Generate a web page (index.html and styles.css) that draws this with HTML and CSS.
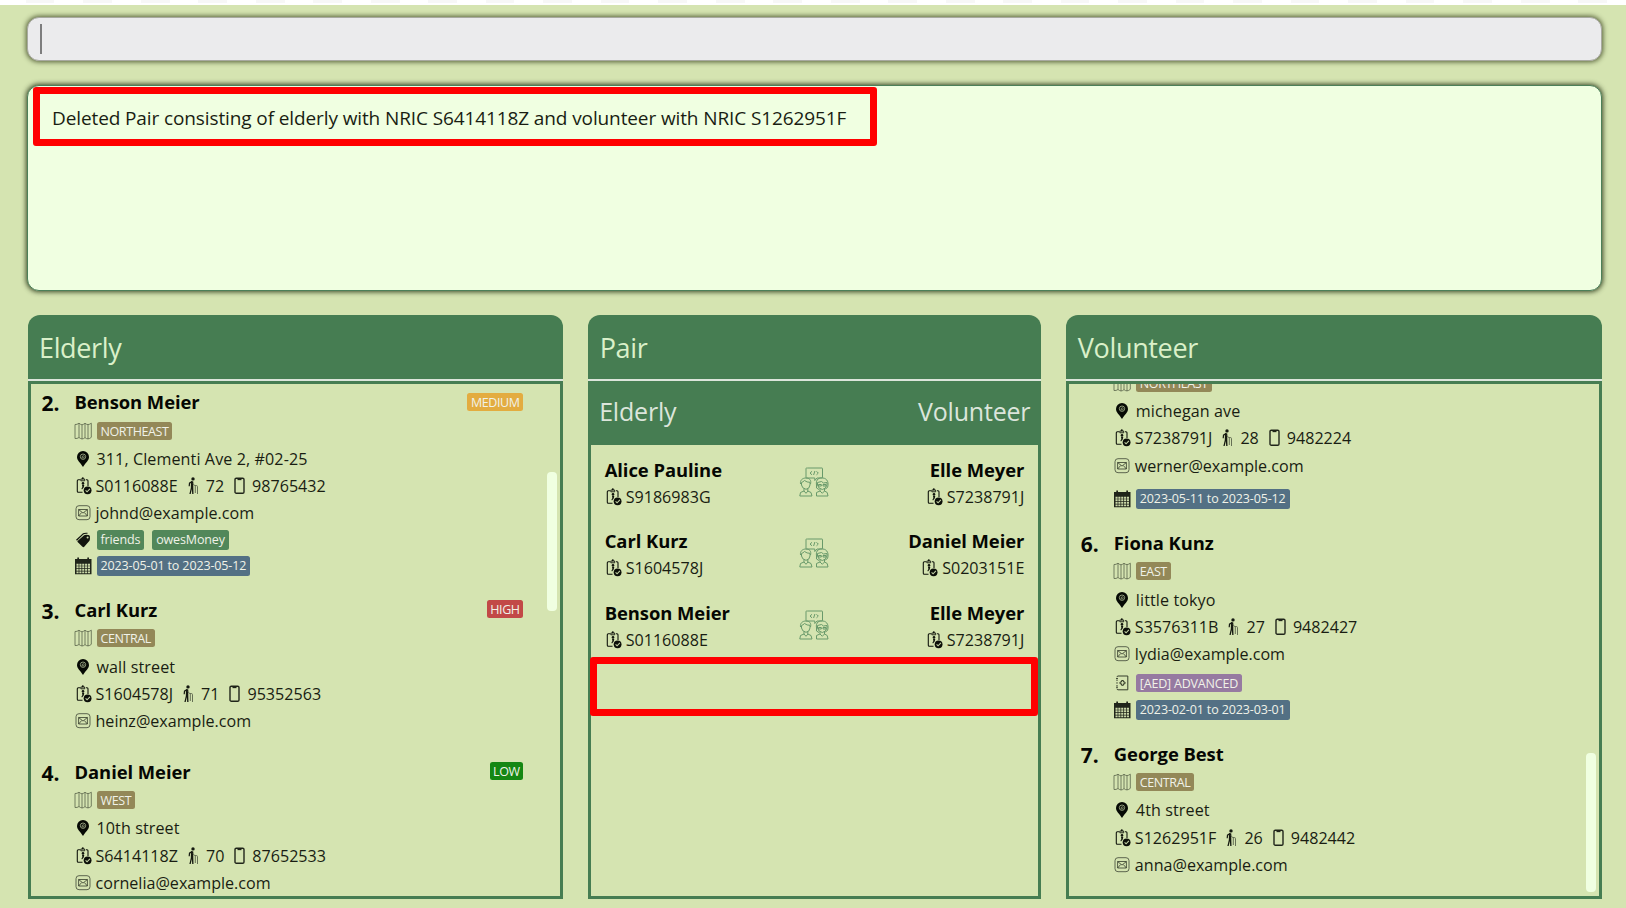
FILE: index.html
```
<!DOCTYPE html>
<html lang="en">
<head>
<meta charset="utf-8">
<title>Elderly and volunteer pairing</title>
<link rel="stylesheet" href="styles.css">
</head>
<body>
<svg class="sprite" aria-hidden="true">
  <symbol id="map" viewBox="0 0 18 18"><path d="M1 2.500Q3 2.800 5 1.200Q6.500 2.600 8 2.800Q9.500 2.500 11 1.300Q12.500 2.500 14 2.600Q15.800 2.400 17.300 1.200V15.300Q15.800 16.700 14 16.900Q12.500 16.900 11 15.600Q9.500 16.900 8 17Q6.500 16.700 5 15.500Q3 16.900 1 16.500ZM5 1.200V15.500M8 2.800V17M11 1.300V15.600M14 2.600V17" fill="none" stroke="#59634a" stroke-width=".8"/></symbol>
  <symbol id="pin" viewBox="0 0 18 18"><path d="M9 1A6 6 0 0 0 3 7C3 10.500 6.300 12.500 9 17C11.700 12.500 15 10.500 15 7A6 6 0 0 0 9 1Z" fill="#060a04"/><circle cx="9" cy="6.700" r="2.700" fill="none" stroke="#abb792" stroke-width=".8"/><path d="M7.500 7.200 9.200 5.700 10.600 6.700M8 7.800H10.300" fill="none" stroke="#abb792" stroke-width=".8"/></symbol>
  <symbol id="idcard" viewBox="0 0 18 18"><path d="M6 2.700H4.300Q3.300 2.700 3.300 3.700V14.300Q3.300 15.300 4.300 15.300H8.500M12 2.700H13Q14 2.700 14 3.700V9" fill="none" stroke="#11150c" stroke-width="1.100"/><path d="M6.800 2H10.700V3.800H6.800Z" fill="none" stroke="#11150c" stroke-width=".9"/><circle cx="8.800" cy="1.300" r="1" fill="#11150c"/><circle cx="9" cy="6.400" r="1.300" fill="#11150c"/><path d="M8 8H10.300L9.700 10.500 8 12.500 7.400 11.700 8.400 10Z" fill="#11150c"/><circle cx="13.600" cy="13.300" r="3.900" fill="#0b0e08"/><path d="m11.600 13.300 1.500 1.500 2.800-2.900" fill="none" stroke="#c4d2a6" stroke-width="1.100"/></symbol>
  <symbol id="mail" viewBox="0 0 18 18"><rect x="2" y="1.700" width="14" height="14" rx="3" fill="none" stroke="#5d664f" stroke-width="1"/><path d="M4.600 5.500H13.400V12H4.600ZM4.600 5.500 9 9.100 13.400 5.500M4.600 12 7.700 8.500M13.400 12 10.300 8.500" fill="none" stroke="#343b2b" stroke-width=".8"/></symbol>
  <symbol id="tags" viewBox="0 0 18 18"><path d="m2 8.800 7-6.600Q10 1.500 13.500 1.700V2.800Q10.500 2.600 9.300 3.400L3 9.700Z" fill="#12150e"/><path d="m3.600 10 6.500-5.800Q11 3.500 14.500 4Q15.800 4.300 15.900 5.500Q16.200 8.500 15.500 9.700L10 16.100Q9.200 16.500 8.500 15.800L3.600 11Q3.200 10.500 3.600 10Z" fill="#12150e"/><circle cx="13.600" cy="6.500" r="1" fill="#cedcac"/></symbol>
  <symbol id="calendar" viewBox="0 0 18 18"><path d="M1 2H17.500V17.200H1ZM3.300.5H5V3H3.300ZM13.300.5H15V3H13.300Z" fill="#20251a"/><path d="M2.500 7.700H16M2.500 10.300H16M2.500 12.900H16M2.500 15.400H16" stroke="#cbd9a9" stroke-width="1.900" stroke-dasharray="2.100 .75"/></symbol>
  <symbol id="walk" viewBox="0 0 11 18"><circle cx="5" cy="1.900" r="1.700" fill="#151910"/><path d="M4.400 4.300 1.500 6.200 1.200 9.300" fill="none" stroke="#151910" stroke-width="1.200"/><path d="M3 4.500H5.300V10.500L5.500 17H4.200L3.900 12 2.700 17H1.400L2.800 11Z" fill="#151910"/><path d="M5 6.500 6.500 8.500H8.300Q9.500 8.500 9.500 9.700V17M7.300 9V16" fill="none" stroke="#59624b" stroke-width=".9"/></symbol>
  <symbol id="phone" viewBox="0 0 11 18"><rect x="1" y="1.200" width="9" height="15" rx="1.300" fill="none" stroke="#20251a" stroke-width="1.400"/><path d="M3.500 2.300H7.500" stroke="#20251a" stroke-width="1.700"/></symbol>
  <symbol id="medical" viewBox="0 0 18 18"><path d="M4 3.200Q4 2 5 2H14.800V15.800H5Q4 15.800 4 14.600M4 5.500V7M4 8.200V9.700M4 11V12.500" fill="none" stroke="#353c2b" stroke-width="1"/><path d="M3 4.500H5M3 13.300H5" stroke="#353c2b" stroke-width=".9"/><path d="M8.600 6.500H10.400V8H12V9.800H10.400V11.300H8.600V9.800H7V8H8.600Z" fill="none" stroke="#252b1c" stroke-width=".9"/></symbol>
  <symbol id="couple" viewBox="0 0 30 30"><g fill="none" stroke="#68996a" stroke-width="1"><path d="M8.500 1H23Q23.500 1 23.500 1.500V10.500Q23.500 11 23 11H18L15.800 13.500V11H7.500Q7 11 7 10.500V1.500Q7 1 7.500 1ZM13 4.300 11 6.100 13 7.800M17.500 4.300 19.300 6.100 17.500 7.800M15.900 4 14.600 8"/><path d="M1.500 17C1 13 3.500 11 7 11S12.500 13 11.500 17M2.500 15.500Q4 15 5.500 13.500Q8 15.500 11 15.300V18Q10.500 22 7 22.300Q3 21.500 2.500 18ZM5 21.500V24L1.500 25.500.8 29H13L12 25.500 8.800 24V21.500M5 24 7 26.300 9 24"/><path d="M17.500 18C16.500 12 20.500 10.300 24 11C28.500 11.500 30 16 28.500 20.500L26.300 22M17.500 18V21L20 22.500M18.500 15.500 22.500 14.500 24.500 16 28 15.500V18Q27 22 23.300 22.500Q19 21.500 18.500 18ZM19.500 17.500H22.300V19H19.500ZM24 17.500H27V19H24ZM21 22V24L17.500 25.500V29H29L28.200 25.500 25.500 24V22M21 24 23.300 26.300 25.500 24"/></g></symbol>
</svg>

<div class="strip"></div>
<main class="window">
  <div class="command"><span class="caret"></span></div>
  <section class="result">
    <p class="message">Deleted Pair consisting of elderly with NRIC S6414118Z and volunteer with NRIC S1262951F</p>
    <div class="mark mark-message"></div>
  </section>

  <div class="panels">
    <section class="panel wide">
      <h2 class="panel-title">Elderly</h2>
      <div class="panel-body">
        <article class="person">
          <div class="index">2.</div>
          <div class="details">
            <div class="name-row"><h3>Benson Meier</h3><span class="badge medium">MEDIUM</span></div>
            <div class="row region-row"><svg class="icon"><use href="#map"/></svg><span class="badge region">NORTHEAST</span></div>
            <div class="row"><svg class="icon"><use href="#pin"/></svg><span class="address">311, Clementi Ave 2, #02-25</span></div>
            <div class="row"><svg class="icon"><use href="#idcard"/></svg><span>S0116088E</span><svg class="icon slim"><use href="#walk"/></svg><span>72</span><svg class="icon slim"><use href="#phone"/></svg><span>98765432</span></div>
            <div class="row"><svg class="icon"><use href="#mail"/></svg><span>johnd@example.com</span></div>
            <div class="row chips"><svg class="icon"><use href="#tags"/></svg><span class="badge tag">friends</span><span class="badge tag">owesMoney</span></div>
            <div class="row chips"><svg class="icon"><use href="#calendar"/></svg><span class="badge date">2023-05-01 to 2023-05-12</span></div>
          </div>
        </article>
        <article class="person">
          <div class="index">3.</div>
          <div class="details">
            <div class="name-row"><h3>Carl Kurz</h3><span class="badge high">HIGH</span></div>
            <div class="row region-row"><svg class="icon"><use href="#map"/></svg><span class="badge region">CENTRAL</span></div>
            <div class="row"><svg class="icon"><use href="#pin"/></svg><span class="address">wall street</span></div>
            <div class="row"><svg class="icon"><use href="#idcard"/></svg><span>S1604578J</span><svg class="icon slim"><use href="#walk"/></svg><span>71</span><svg class="icon slim"><use href="#phone"/></svg><span>95352563</span></div>
            <div class="row"><svg class="icon"><use href="#mail"/></svg><span>heinz@example.com</span></div>
          </div>
        </article>
        <article class="person after-short">
          <div class="index">4.</div>
          <div class="details">
            <div class="name-row"><h3>Daniel Meier</h3><span class="badge low">LOW</span></div>
            <div class="row region-row"><svg class="icon"><use href="#map"/></svg><span class="badge region">WEST</span></div>
            <div class="row"><svg class="icon"><use href="#pin"/></svg><span class="address">10th street</span></div>
            <div class="row"><svg class="icon"><use href="#idcard"/></svg><span>S6414118Z</span><svg class="icon slim"><use href="#walk"/></svg><span>70</span><svg class="icon slim"><use href="#phone"/></svg><span>87652533</span></div>
            <div class="row"><svg class="icon"><use href="#mail"/></svg><span>cornelia@example.com</span></div>
          </div>
        </article>
        <div class="thumb thumb-middle"></div>
      </div>
    </section>

    <section class="panel narrow">
      <h2 class="panel-title">Pair</h2>
      <div class="pair-head"><span>Elderly</span><span>Volunteer</span></div>
      <div class="panel-body pair-body">
        <article class="pair">
          <div class="side"><h3>Alice Pauline</h3><div class="row"><svg class="icon"><use href="#idcard"/></svg><span>S9186983G</span></div></div>
          <svg class="couple"><use href="#couple"/></svg>
          <div class="side end"><h3>Elle Meyer</h3><div class="row"><svg class="icon"><use href="#idcard"/></svg><span>S7238791J</span></div></div>
        </article>
        <article class="pair">
          <div class="side"><h3>Carl Kurz</h3><div class="row"><svg class="icon"><use href="#idcard"/></svg><span>S1604578J</span></div></div>
          <svg class="couple"><use href="#couple"/></svg>
          <div class="side end"><h3>Daniel Meier</h3><div class="row"><svg class="icon"><use href="#idcard"/></svg><span>S0203151E</span></div></div>
        </article>
        <article class="pair">
          <div class="side"><h3>Benson Meier</h3><div class="row"><svg class="icon"><use href="#idcard"/></svg><span>S0116088E</span></div></div>
          <svg class="couple"><use href="#couple"/></svg>
          <div class="side end"><h3>Elle Meyer</h3><div class="row"><svg class="icon"><use href="#idcard"/></svg><span>S7238791J</span></div></div>
        </article>
      </div>
      <div class="mark mark-pair"></div>
    </section>

    <section class="panel wide">
      <h2 class="panel-title">Volunteer</h2>
      <div class="panel-body scrolled">
        <article class="person">
          <div class="index"></div>
          <div class="details">
            <div class="row region-row"><svg class="icon"><use href="#map"/></svg><span class="badge region">NORTHEAST</span></div>
            <div class="row"><svg class="icon"><use href="#pin"/></svg><span class="address">michegan ave</span></div>
            <div class="row"><svg class="icon"><use href="#idcard"/></svg><span>S7238791J</span><svg class="icon slim"><use href="#walk"/></svg><span>28</span><svg class="icon slim"><use href="#phone"/></svg><span>9482224</span></div>
            <div class="row"><svg class="icon"><use href="#mail"/></svg><span>werner@example.com</span></div>
            <div class="row chips spaced"><svg class="icon"><use href="#calendar"/></svg><span class="badge date">2023-05-11 to 2023-05-12</span></div>
          </div>
        </article>
        <article class="person">
          <div class="index">6.</div>
          <div class="details">
            <div class="name-row"><h3>Fiona Kunz</h3></div>
            <div class="row region-row"><svg class="icon"><use href="#map"/></svg><span class="badge region">EAST</span></div>
            <div class="row"><svg class="icon"><use href="#pin"/></svg><span class="address">little tokyo</span></div>
            <div class="row"><svg class="icon"><use href="#idcard"/></svg><span>S3576311B</span><svg class="icon slim"><use href="#walk"/></svg><span>27</span><svg class="icon slim"><use href="#phone"/></svg><span>9482427</span></div>
            <div class="row"><svg class="icon"><use href="#mail"/></svg><span>lydia@example.com</span></div>
            <div class="row chips skill-row"><svg class="icon"><use href="#medical"/></svg><span class="badge skill">[AED] ADVANCED</span></div>
            <div class="row chips"><svg class="icon"><use href="#calendar"/></svg><span class="badge date">2023-02-01 to 2023-03-01</span></div>
          </div>
        </article>
        <article class="person">
          <div class="index">7.</div>
          <div class="details">
            <div class="name-row"><h3>George Best</h3></div>
            <div class="row region-row"><svg class="icon"><use href="#map"/></svg><span class="badge region">CENTRAL</span></div>
            <div class="row"><svg class="icon"><use href="#pin"/></svg><span class="address">4th street</span></div>
            <div class="row"><svg class="icon"><use href="#idcard"/></svg><span>S1262951F</span><svg class="icon slim"><use href="#walk"/></svg><span>26</span><svg class="icon slim"><use href="#phone"/></svg><span>9482442</span></div>
            <div class="row"><svg class="icon"><use href="#mail"/></svg><span>anna@example.com</span></div>
          </div>
        </article>
        <div class="thumb thumb-end"></div>
      </div>
    </section>
  </div>
</main>
</body>
</html>
```
FILE: styles.css
```
* { box-sizing: border-box; }

body {
  margin: 0;
  height: 908px;
  overflow: hidden;
  display: flex;
  flex-direction: column;
  background: #d5e4b1;
  color: #191d12;
  font-family: "Open Sans", "Noto Sans", sans-serif;
  font-size: 16.100px;
}

h2, h3, p { margin: 0; }

.sprite { position: absolute; width: 0; height: 0; }

.strip {
  flex: none;
  height: 5px;
  background: repeating-linear-gradient(90deg, #f7f7f7 0 28.750px, #fff 28.750px 57.500px) -31.750px 0 / 1700px 3px no-repeat #fff;
}

.window {
  flex: 1;
  min-height: 0;
  display: flex;
  flex-direction: column;
  padding: 12px 24px 9px 27px;
}

.command {
  flex: none;
  height: 44px;
  margin-bottom: 24px;
  padding: 6px 12px;
  background: #ebebed;
  border: 1px solid #a8a9a0;
  border-radius: 12px;
  box-shadow: 0 0 5px 1px rgba(40, 50, 15, .75);
}

.caret { display: block; width: 2px; height: 30px; background: #7d7d7e; }

.result {
  position: relative;
  flex: none;
  height: 206px;
  margin-bottom: 24px;
  padding: 19px 24px;
  background: #f0ffe1;
  border: 1px solid #4c8059;
  border-radius: 12px;
  box-shadow: 0 0 5px 1px rgba(30, 45, 15, .85);
}

.message { font-size: 19px; line-height: 26px; letter-spacing: -.11px; white-space: nowrap; }

.mark { position: absolute; border: 7px solid #f00; border-radius: 3px; }
.mark-message { left: 5px; top: 1px; width: 844px; height: 59px; }
.mark-pair { left: 1.500px; top: 342px; width: 448px; height: 59px; }

.panels { flex: 1; min-height: 0; display: flex; gap: 25px; padding-left: .5px; }
.panel { position: relative; display: flex; flex-direction: column; min-width: 0; }
.wide { flex: 535.500 0 0; }
.narrow { flex: 453 0 0; }

.panel-title {
  flex: none;
  height: 64px;
  padding: 0 11.500px;
  border-radius: 12px 12px 0 0;
  background: #467d52;
  color: #daf0c9;
  font-size: 27px;
  font-weight: 400;
  letter-spacing: -.35px;
  line-height: 65px;
}

.panel-title + div { border-top: 3px solid #467d52; margin-top: 2px; box-shadow: 0 -2px #dce5db; }

.panel-body {
  position: relative;
  flex: 1;
  min-height: 0;
  overflow: hidden;
  padding: 4px 37px 0 11px;
  border: 3px solid #467d52;
}

.person { display: flex; margin-bottom: 17px; }
.after-short { margin-top: 23px; }
.person:has(+ .after-short) { margin-bottom: 0; }
.index { flex: none; width: 33px; font-size: 21px; font-weight: 700; line-height: 30px; color: #050703; }
.details { flex: 1; min-width: 0; }
.name-row { display: flex; justify-content: space-between; align-items: center; height: 28px; }
h3 { font-size: 18.400px; font-weight: 700; line-height: 28px; letter-spacing: -.05px; color: #050703; }
.name-row .badge { margin-top: -1px; }

.row { display: flex; align-items: center; height: 27.300px; white-space: nowrap; }
.region-row { height: 29px; }
.chips { height: 26px; }
.spaced { margin-top: 6.500px; }
.skill-row { margin-top: 2px; height: 27px; }
.icon { flex: none; width: 18px; height: 18px; margin-right: 4px; margin-left: -1px; }
.slim { width: 11px; margin-left: 10px; margin-right: 7px; }
.address { margin-left: 1px; letter-spacing: .1px; }

.badge {
  display: block;
  height: 18px;
  padding: 0 4px;
  border-radius: 2.500px;
  color: #f0f2e8;
  font-size: 12.500px;
  letter-spacing: -.4px;
  line-height: 19px;
}
.name-row .badge { padding: 0 3.500px; }
.row .badge { margin-left: 1px; }
.region { background: #938858; }
.medium { background: #e3ac40; }
.high { background: #c24947; }
.low { background: #158713; }
.row .skill { background: #967aa1; letter-spacing: -.2px; }
.tag, .date { height: 20px; line-height: 20px; letter-spacing: -.13px; }
.tag { background: #52875a; letter-spacing: -.15px; }
.row .tag + .tag { margin-left: 8px; }
.date { background: #537084; }

.thumb { position: absolute; right: 3px; width: 10.500px; height: 139.500px; border-radius: 4px; background: #f0ffe1; }
.thumb-middle { top: 87.500px; }
.thumb-end { bottom: 4px; }

.pair-head {
  flex: none;
  display: flex;
  justify-content: space-between;
  height: 64px;
  padding: 0 11px;
  background: #467d52;
  color: #dce5db;
  font-size: 25px;
  font-weight: 400;
  letter-spacing: -.2px;
  line-height: 55px;
}
.pair-body { border-top: 0; padding: 10.500px 14px 0 13.500px; }
.pair { display: grid; grid-template-columns: 1fr 30px 1fr; height: 71.600px; }
.pair h3 { line-height: 28px; }
.pair .row { height: 26px; }
.side .icon { margin-left: -1px; margin-right: 4px; }
.side.end { display: flex; flex-direction: column; align-items: flex-end; }
.couple { width: 30px; height: 30px; margin-top: 11px; margin-left: -1px; }

.scrolled { padding-top: 0; padding-left: 11.500px; }
.scrolled .person:first-child { margin-top: -15.500px; }
```
